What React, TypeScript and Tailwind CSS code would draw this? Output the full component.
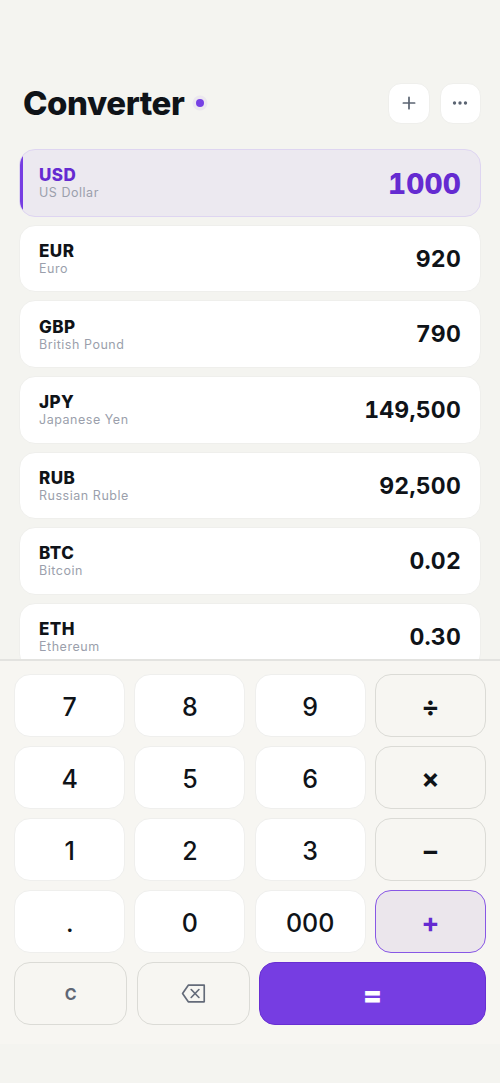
import { useState } from 'react'
import clsx from 'clsx'

const currencies = [
  { code: 'USD', name: 'US Dollar', value: '1000' },
  { code: 'EUR', name: 'Euro', value: '920' },
  { code: 'GBP', name: 'British Pound', value: '790' },
  { code: 'JPY', name: 'Japanese Yen', value: '149,500' },
  { code: 'RUB', name: 'Russian Ruble', value: '92,500' },
  { code: 'BTC', name: 'Bitcoin', value: '0.02' },
  { code: 'ETH', name: 'Ethereum', value: '0.30' },
]

const keys = ['7', '8', '9', '÷', '4', '5', '6', '×', '1', '2', '3', '−', '.', '0', '000', '+']
const operators = ['÷', '×', '−', '+']

export default function App() {
  const [active, setActive] = useState('USD')
  const [operator, setOperator] = useState('+')

  return (
    <div className="flex h-[1083px] w-[500px] flex-col overflow-hidden bg-[#f4f4f0] font-['Inter',sans-serif] text-[#0f1318]">
      {/* Header */}
      <header className="flex shrink-0 items-center justify-between pt-[82.5px] pr-[19px] pl-[23px]">
        <div className="flex items-center gap-[12px]">
          <h1 className="text-[33px] leading-[41px] font-extrabold tracking-[-0.45px]">Converter</h1>
          <span className="size-[8px] rounded-full bg-[#7640e4] ring-[3.5px] ring-[#ebe7ef]" />
        </div>
        <div className="flex gap-[10px]">
          <IconButton label="Add currency">
            <path d="M12 4.5v15M4.5 12h15" />
          </IconButton>
          <IconButton label="More">
            <g fill="currentColor">
              <circle cx="4.7" cy="12" r="1.1" />
              <circle cx="12" cy="12" r="1.1" />
              <circle cx="19.3" cy="12" r="1.1" />
            </g>
          </IconButton>
        </div>
      </header>

      {/* Currency list */}
      <main className="mt-[25.2px] flex min-h-0 flex-1 flex-col gap-[8px] overflow-hidden px-[19px]">
        {currencies.map((c) => (
          <CurrencyRow key={c.code} {...c} active={c.code === active} onSelect={() => setActive(c.code)} />
        ))}
      </main>

      {/* Keypad */}
      <section className="h-[385px] shrink-0 border-t-2 border-[#e3e3e0] bg-[#f7f6f2] px-[14.3px] pt-[13.3px]">
        <div className="grid grid-cols-4 gap-[9.4px]">
          {keys.map((k) => {
            const isOperator = operators.includes(k)
            return (
              <button
                key={k}
                onClick={() => isOperator && setOperator(k)}
                className={clsx(
                  'flex h-[62.6px] items-center justify-center rounded-[16px] border',
                  !isOperator && 'border-[#efefed] bg-white pt-[4px] text-[25px] font-[550]',
                  isOperator && 'pt-[3px] text-[27px] font-bold',
                  isOperator && k !== operator && 'border-[#dbdbd6] bg-[#f7f6f2]',
                  isOperator && k === operator && 'border-[#8857e5] bg-[#ebe6ec] text-[#652bd1]'
                )}
              >
                {k}
              </button>
            )
          })}
        </div>
        <div className="mt-[9.4px] flex gap-[9.6px]">
          <button className="flex h-[62.6px] flex-1 items-center justify-center rounded-[16px] border border-[#dbdbd6] text-[16px] font-bold text-[#606775]">
            C
          </button>
          <button
            aria-label="Delete"
            className="flex h-[62.6px] flex-1 items-center justify-center rounded-[16px] border border-[#dbdbd6] text-[#646b79]"
          >
            <BackspaceIcon />
          </button>
          <button className="flex h-[62.6px] w-[226.3px] items-center justify-center rounded-[16px] border border-[#682fd2] bg-[#763de2] pt-[2px] text-[28px] font-black text-white">
            =
          </button>
        </div>
      </section>
      <div className="h-[39px] shrink-0" />
    </div>
  )
}

function IconButton({ label, children }: { label: string; children: React.ReactNode }) {
  return (
    <button
      aria-label={label}
      className="flex size-[41.5px] items-center justify-center rounded-[13px] border border-[#efefec] bg-white text-[#5b6472]"
    >
      <svg width="18" height="18" viewBox="0 0 24 24" fill="none" stroke="currentColor" strokeWidth="2.3" strokeLinecap="round">
        {children}
      </svg>
    </button>
  )
}

type RowProps = { code: string; name: string; value: string; active: boolean; onSelect: () => void }

function CurrencyRow({ code, name, value, active, onSelect }: RowProps) {
  return (
    <button
      onClick={onSelect}
      className={clsx(
        'relative flex h-[67.6px] shrink-0 items-center justify-between overflow-hidden rounded-[16px] border px-[19px] text-left',
        active ? 'border-[#ded5f1] bg-[#ece9f0] text-[#652bd1]' : 'border-[#efefec] bg-white'
      )}
    >
      {active && <span className="absolute -inset-y-px -left-px w-[3.5px] bg-[#763de2]" />}
      <span className="flex flex-col pt-[2px]">
        <span className="text-[17px] leading-[19px] font-extrabold tracking-[0.5px]">{code}</span>
        <span className="text-[12.5px] leading-[16px] tracking-[0.53px] text-[#9b9fac]">{name}</span>
      </span>
      <span
        className={clsx(
          'tabular-nums',
          active ? 'pt-[2px] text-[28px] font-extrabold tracking-[0.2px]' : 'pt-px text-[23px] font-bold tracking-[0.2px]'
        )}
      >
        {value}
      </span>
    </button>
  )
}

function BackspaceIcon() {
  return (
    <svg width="25" height="25" viewBox="0 0 24 24" fill="none" stroke="currentColor" strokeWidth="1.6" strokeLinecap="round" strokeLinejoin="round">
      <path d="M22.3 4H7L1.5 12L7 20h15.3z" />
      <path d="M9.8 8.2l7.4 7.6M17.2 8.2L9.8 15.8" />
    </svg>
  )
}
